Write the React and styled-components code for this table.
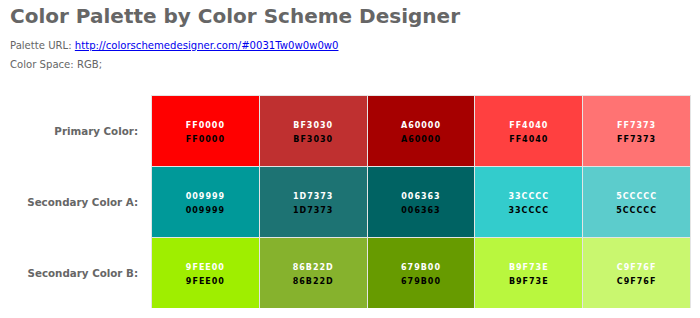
import React from "react";
import styled, { createGlobalStyle } from "styled-components";

const rows = [
  { label: "Primary Color:", colors: ["FF0000", "BF3030", "A60000", "FF4040", "FF7373"] },
  { label: "Secondary Color A:", colors: ["009999", "1D7373", "006363", "33CCCC", "5CCCCC"] },
  { label: "Secondary Color B:", colors: ["9FEE00", "86B22D", "679B00", "B9F73E", "C9F76F"] },
];

export default function App() {
  return (
    <>
      <GlobalStyle />
      <Page>
        <Title>Color Palette by Color Scheme Designer</Title>
        <Info>
          <Line>
            Palette URL: <Link href="#">http://colorschemedesigner.com/#0031Tw0w0w0w0</Link>
          </Line>
          <Line>Color Space: RGB;</Line>
        </Info>
        <Palette>
          {rows.map((row) => (
            <React.Fragment key={row.label}>
              <Label>{row.label}</Label>
              {row.colors.map((c) => (
                <Swatch key={c} $color={"#" + c}>
                  <Code $light>{c}</Code>
                  <Code>{c}</Code>
                </Swatch>
              ))}
            </React.Fragment>
          ))}
        </Palette>
      </Page>
    </>
  );
}

const GlobalStyle = createGlobalStyle`
  body {
    margin: 0;
    background: #fff;
    font-family: "DejaVu Sans", Verdana, sans-serif;
  }
`;

const Page = styled.div`
  padding: 4px 10px 0;
  width: 680px;
`;

const Title = styled.h1`
  margin: 0;
  font-size: 20px;
  line-height: 24px;
  font-weight: bold;
  color: #666;
`;

const Info = styled.div`
  margin-top: 8px;
  font-size: 10.1px;
  line-height: 19px;
  color: #666;
`;

const Line = styled.div``;

const Link = styled.a`
  color: #0000ee;
  text-decoration: underline;
`;

const Palette = styled.div`
  margin-top: 22px;
  display: grid;
  grid-template-columns: 141px repeat(5, 1fr);
  grid-auto-rows: 70px;
  gap: 1px;
`;

const Label = styled.div`
  display: flex;
  align-items: center;
  justify-content: flex-end;
  padding-right: 13px;
  font-size: 10.3px;
  font-weight: bold;
  color: #666;
`;

const Swatch = styled.div`
  background: ${(p) => p.$color};
  box-shadow: 0 0 0 1px #e4e4e4;
  display: flex;
  flex-direction: column;
  align-items: center;
  justify-content: center;
  padding-top: 3px;
`;

const Code = styled.div`
  font-size: 8px;
  line-height: 14px;
  font-weight: bold;
  letter-spacing: 1px;
  color: ${(p) => (p.$light ? "#fff" : "#000")};
`;
